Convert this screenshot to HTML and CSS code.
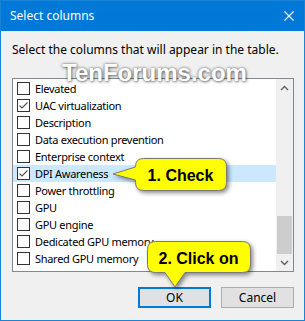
FILE: index.html
```html
<!DOCTYPE html>
<html lang="en">
<head>
    <meta charset="UTF-8">
    <title>Select columns</title>
    <link rel="stylesheet" href="styles.css">
</head>
<body>
    <div class="window">
        <div class="titlebar">
            <span class="title">Select columns</span>
            <svg class="close" width="10" height="10" viewBox="0 0 10 10">
                <path d="M0.5 0.5 L9.5 9.5 M9.5 0.5 L0.5 9.5" stroke="#fff" stroke-width="1.1" fill="none"/>
            </svg>
        </div>

        <div class="content">
            <p class="intro">Select the columns that will appear in the table.</p>

            <div class="listbox">
                <ul class="items">
                    <li class="item"><span class="box"></span>Elevated</li>
                    <li class="item"><span class="box checked"></span>UAC virtualization</li>
                    <li class="item"><span class="box"></span>Description</li>
                    <li class="item"><span class="box"></span>Data execution prevention</li>
                    <li class="item"><span class="box"></span>Enterprise context</li>
                    <li class="item selected"><span class="box checked"></span>DPI Awareness</li>
                    <li class="item"><span class="box"></span>Power throttling</li>
                    <li class="item"><span class="box"></span>GPU</li>
                    <li class="item"><span class="box"></span>GPU engine</li>
                    <li class="item"><span class="box"></span>Dedicated GPU memory</li>
                    <li class="item"><span class="box"></span>Shared GPU memory</li>
                </ul>
                <div class="scrollbar">
                    <div class="arrow">
                        <svg width="9" height="6" viewBox="0 0 9 6"><path d="M1 5 L4.5 1.5 L8 5" stroke="#606060" stroke-width="1.4" fill="none"/></svg>
                    </div>
                    <div class="track"><div class="thumb"></div></div>
                    <div class="arrow">
                        <svg width="9" height="6" viewBox="0 0 9 6"><path d="M1 1 L4.5 4.5 L8 1" stroke="#606060" stroke-width="1.4" fill="none"/></svg>
                    </div>
                </div>
            </div>

            <div class="buttons">
                <button class="btn btn-default">OK</button>
                <button class="btn">Cancel</button>
            </div>
        </div>
    </div>

    <!-- watermark + annotation callouts over the dialog -->
    <div class="watermark">TenForums.com</div>

    <div class="callout callout-check">
        <svg class="callout-shape" width="125" height="40" viewBox="0 0 125 40">
            <path d="M25.5 25 L25.5 27.5 Q25.5 35.5 33.5 35.5 L108.5 35.5 Q116.5 35.5 116.5 27.5 L116.5 11.5 Q116.5 3.5 108.5 3.5 L33.5 3.5 Q25.5 3.5 25.5 11.5 L25.5 12 L3 19 Z" fill="#ffff00" stroke="#7a7a7a" stroke-width="1"/>
        </svg>
        <span class="callout-text">1. Check</span>
    </div>

    <div class="callout callout-click">
        <svg class="callout-shape" width="120" height="55" viewBox="0 0 120 55">
            <path d="M45 34.5 L102.5 34.5 Q110.5 34.5 110.5 26.5 L110.5 11.5 Q110.5 3.5 102.5 3.5 L15.5 3.5 Q7.5 3.5 7.5 11.5 L7.5 26.5 Q7.5 34.5 15.5 34.5 L25 34.5 L35 49 Z" fill="#ffff00" stroke="#7a7a7a" stroke-width="1"/>
        </svg>
        <span class="callout-text">2. Click on</span>
    </div>
</body>
</html>
```

FILE: styles.css
```css
body {
    margin: 0;
    width: 305px;
    height: 321px;
    overflow: hidden;
    font-family: "Noto Sans", sans-serif;
    font-size: 12px;
    color: #000;
}

.window {
    box-sizing: border-box;
    width: 305px;
    height: 321px;
    border: 1px solid #1883d7;
    background-color: #f0f0f0;
}

.titlebar {
    height: 30px;
    background-color: #0078d7;
    display: flex;
    align-items: center;
    justify-content: space-between;
    padding: 0 10px 0 9px;
}

.title {
    color: #fff;
    font-size: 12px;
    line-height: 16px;
}

.content {
    padding: 11px 10px 0 11px;
}

.intro {
    margin: 0;
    line-height: 16px;
}

.listbox {
    box-sizing: border-box;
    margin-top: 20px;
    width: 282px;
    height: 194px;
    border: 1px solid #828790;
    background-color: #fff;
    display: flex;
}

.items {
    list-style: none;
    margin: 0;
    padding: 1px 0 0;
    flex: 1;
    overflow: hidden;
}

.item {
    height: 17px;
    display: flex;
    align-items: center;
    gap: 5px;
    padding-left: 4px;
    white-space: nowrap;
    font-size: 11px;
    letter-spacing: -0.3px;
}

.item.selected {
    background-color: #cce8ff;
}

.box {
    box-sizing: border-box;
    width: 13px;
    height: 13px;
    flex: none;
    border: 1px solid #333;
    background-color: #fff;
}

.box.checked {
    background: #fff url("data:image/svg+xml,%3Csvg xmlns='http://www.w3.org/2000/svg' width='11' height='11'%3E%3Cpath d='M1.5 5.5 L4 8 L9.5 2.5' stroke='%23505050' stroke-width='1.1' fill='none'/%3E%3C/svg%3E") no-repeat center;
}

.scrollbar {
    width: 17px;
    flex: none;
    background-color: #f0f0f0;
    display: flex;
    flex-direction: column;
}

.arrow {
    height: 17px;
    display: flex;
    align-items: center;
    justify-content: center;
}

.track {
    flex: 1;
    display: flex;
    flex-direction: column;
    justify-content: flex-end;
}

.thumb {
    height: 38px;
    margin: 0 1px;
    background-color: #cdcdcd;
}

.buttons {
    margin-top: 15px;
    display: flex;
    justify-content: flex-end;
    gap: 10px;
}

.btn {
    box-sizing: border-box;
    width: 73px;
    height: 21px;
    padding: 0;
    border: 1px solid #adadad;
    background-color: #e1e1e1;
    font-family: "Noto Sans", sans-serif;
    font-size: 12px;
    color: #000;
}

.btn-default {
    border: 2px solid #0078d7;
}

.watermark {
    position: absolute;
    left: 62px;
    top: 61px;
    font-family: "Liberation Sans", Arial, sans-serif;
    font-weight: bold;
    font-size: 24px;
    line-height: 24px;
    color: #fff;
    text-shadow: 0 0 3px rgba(0, 0, 0, 0.55), 1px 1px 3px rgba(0, 0, 0, 0.4);
}

.callout {
    position: absolute;
}

.callout-shape {
    display: block;
    filter: drop-shadow(2px 2px 2px rgba(0, 0, 0, 0.45));
}

.callout-text {
    position: absolute;
    display: flex;
    align-items: center;
    justify-content: center;
    padding-top: 3px;
    box-sizing: border-box;
    font-family: "Liberation Sans", Arial, sans-serif;
    font-weight: bold;
    font-size: 16px;
    color: #000;
}

.callout-check {
    left: 110px;
    top: 155px;
}

.callout-check .callout-text {
    left: 25px;
    top: 4px;
    width: 91px;
    height: 31px;
}

.callout-click {
    left: 140px;
    top: 238px;
}

.callout-click .callout-text {
    left: 7px;
    top: 4px;
    width: 103px;
    height: 30px;
}
```
